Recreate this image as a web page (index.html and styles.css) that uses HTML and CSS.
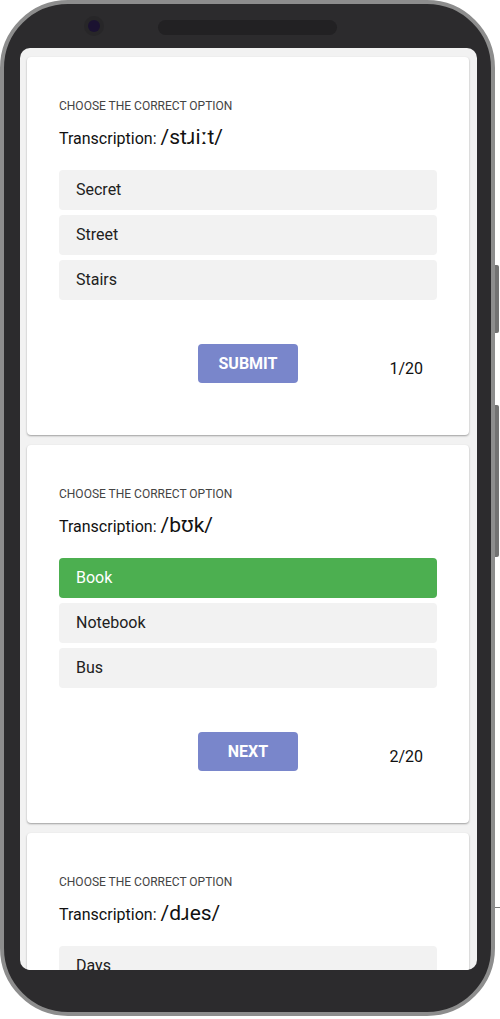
FILE: index.html
```html
<!DOCTYPE html>
<html lang="en">
<head>
<meta charset="utf-8">
<title>Quiz</title>
<link rel="stylesheet" href="styles.css">
</head>
<body>
<div class="phone">
  <span class="side-btn side-btn-top"></span>
  <span class="side-btn side-btn-bottom"></span>
  <div class="phone-top">
    <span class="camera"></span>
    <span class="speaker"></span>
  </div>
  <div class="screen">
    <div class="feed">
      <section class="card">
        <div class="label">CHOOSE THE CORRECT OPTION</div>
        <div class="transcription">Transcription: <span class="ipa">/stɹiːt/</span></div>
        <div class="options">
          <div class="option">Secret</div>
          <div class="option">Street</div>
          <div class="option">Stairs</div>
        </div>
        <div class="footer">
          <button class="action">SUBMIT</button>
          <span class="counter">1/20</span>
        </div>
      </section>
      <section class="card">
        <div class="label">CHOOSE THE CORRECT OPTION</div>
        <div class="transcription">Transcription: <span class="ipa">/bʊk/</span></div>
        <div class="options">
          <div class="option option-correct">Book</div>
          <div class="option">Notebook</div>
          <div class="option">Bus</div>
        </div>
        <div class="footer">
          <button class="action">NEXT</button>
          <span class="counter">2/20</span>
        </div>
      </section>
      <section class="card">
        <div class="label">CHOOSE THE CORRECT OPTION</div>
        <div class="transcription">Transcription: <span class="ipa">/dɹes/</span></div>
        <div class="options">
          <div class="option">Days</div>
        </div>
      </section>
    </div>
  </div>
</div>
</body>
</html>
```
FILE: styles.css
```css
html, body {
  margin: 0;
  padding: 0;
}

body {
  background: #fff linear-gradient(to bottom, transparent 907px, #7a7a7a 907px, #7a7a7a 908px, transparent 908px);
  font-family: Roboto, "Noto Sans", sans-serif;
}

.phone {
  position: relative;
  box-sizing: border-box;
  width: 495px;
  height: 1016px;
  border: 4px solid #8d8d8d;
  border-radius: 68px;
  background: #2c2b2d;
  display: flex;
  flex-direction: column;
}

.side-btn {
  position: absolute;
  right: -8px;
  width: 4px;
  background: #727272;
  border-radius: 0 2px 2px 0;
}

.side-btn-top {
  top: 261px;
  height: 68px;
}

.side-btn-bottom {
  top: 401px;
  height: 152px;
}

.phone-top {
  flex: none;
  height: 44px;
  display: flex;
  align-items: center;
  padding-left: 80px;
  gap: 54px;
}

.camera {
  width: 20px;
  height: 20px;
  border-radius: 50%;
  background: #272628;
  display: flex;
  align-items: center;
  justify-content: center;
}

.camera::after {
  content: "";
  width: 12px;
  height: 12px;
  border-radius: 50%;
  background: #1b1231;
}

.speaker {
  width: 179px;
  height: 15px;
  margin-top: 2px;
  border-radius: 8px;
  background: #222123;
}

.screen {
  flex: none;
  margin: 0 14px 0 16px;
  height: 922px;
  background: #f2f2f2;
  border-radius: 10px;
  overflow: hidden;
}

.feed {
  padding: 9px 8px 0 7px;
  display: flex;
  flex-direction: column;
  gap: 10px;
}

.card {
  background: #fff;
  border-radius: 4px;
  box-shadow: 0 1px 2px rgba(0, 0, 0, 0.35);
  padding: 42px 32px 52px;
}

.label {
  font-size: 12px;
  line-height: 14px;
  color: #444;
}

.transcription {
  margin-top: 12px;
  height: 28px;
  line-height: 28px;
  font-size: 16px;
  color: #111;
}

.ipa {
  font-size: 21px;
  line-height: 20px;
}

.options {
  margin-top: 17px;
  display: flex;
  flex-direction: column;
  gap: 5px;
}

.option {
  height: 40px;
  line-height: 40px;
  padding: 0 17px;
  background: #f2f2f2;
  border-radius: 4px;
  font-size: 16px;
  color: #212121;
}

.option-correct {
  background: #4caf50;
  color: #fff;
}

.footer {
  margin-top: 44px;
  display: grid;
  grid-template-columns: 1fr 100px 1fr;
  align-items: start;
}

.action {
  grid-column: 2;
  height: 39px;
  border: none;
  border-radius: 4px;
  background: #7986cb;
  color: #fff;
  font-family: Roboto, "Noto Sans", sans-serif;
  font-size: 16px;
  font-weight: 700;
  padding: 0;
}

.counter {
  grid-column: 3;
  justify-self: end;
  margin-top: 15px;
  padding-right: 14px;
  font-size: 16px;
  line-height: 20px;
  color: #111;
}
```
